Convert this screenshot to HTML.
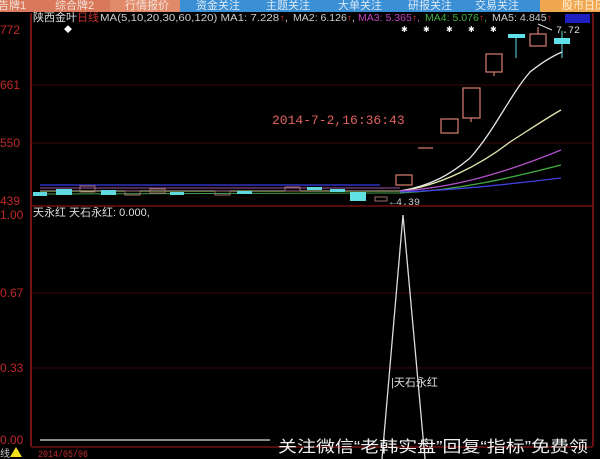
<!DOCTYPE html>
<html><head><meta charset="utf-8"><style>
html,body{margin:0;padding:0;background:#000;width:600px;height:459px;overflow:hidden}
svg{display:block}
text{font-family:"Liberation Sans","Noto Sans CJK SC",sans-serif}
.m{font-family:"Liberation Mono","Noto Sans CJK SC",monospace}
</style></head><body>
<svg width="600" height="459" viewBox="0 0 600 459" xmlns="http://www.w3.org/2000/svg">
<rect width="600" height="459" fill="#000"/>
<!-- top tabs -->
<rect x="0" y="0" width="180" height="12" fill="#d9785a"/>
<rect x="110" y="0" width="70" height="12" fill="#e08a6a"/>
<rect x="180" y="0" width="360" height="12" fill="#3b8fd4"/>
<rect x="540" y="0" width="60" height="12" fill="#f0a850"/>
<g font-size="11" fill="#f4e0d8">
<text x="-2" y="9">告牌1</text><text x="55" y="9">综合牌2</text><text x="125" y="9">行情报价</text>
<g fill="#dbe9f6"><text x="196" y="9">资金关注</text><text x="266" y="9">主题关注</text><text x="338" y="9">大单关注</text><text x="408" y="9">研报关注</text><text x="475" y="9">交易关注</text></g><text x="562" y="9" fill="#fff0d8">股市日历</text>
</g>
<!-- axes -->
<line x1="31" y1="13" x2="31" y2="446" stroke="#a01818" stroke-width="1.5"/>
<line x1="593" y1="13" x2="593" y2="446" stroke="#901818" stroke-width="1.5"/>
<g stroke="#3a0a0a" stroke-width="1">
<line x1="31" y1="85" x2="593" y2="85"/><line x1="31" y1="143" x2="593" y2="143"/>
<line x1="31" y1="293" x2="593" y2="293"/><line x1="31" y1="368" x2="593" y2="368"/>
</g>
<line x1="31" y1="206" x2="593" y2="206" stroke="#701010" stroke-width="1.5"/>
<line x1="31" y1="447" x2="593" y2="447" stroke="#701010" stroke-width="1.5"/>
<g font-size="12" fill="#c02828" class="m">
<text x="0" y="34">772</text><text x="0" y="89">661</text><text x="0" y="147">550</text><text x="0" y="205">439</text>
<text x="0" y="219">1.00</text><text x="0" y="297">0.67</text><text x="0" y="372">0.33</text><text x="0" y="444">0.00</text>
</g>
<!-- header row -->
<text x="33" y="21" font-size="11" fill="#ddd">陕西金叶<tspan fill="#c03030">日线</tspan></text>
<g font-size="10" class="m" fill="#ccc">
<text x="100" y="21" textLength="188" lengthAdjust="spacingAndGlyphs">MA(5,10,20,30,60,120) MA1: 7.228<tspan fill="#d03030">↑</tspan>,</text>
<text x="293" y="21" textLength="62" lengthAdjust="spacingAndGlyphs">MA2: 6.126<tspan fill="#d03030">↑</tspan>,</text>
<text x="358" y="21" textLength="62" lengthAdjust="spacingAndGlyphs" fill="#c040c0">MA3: 5.365<tspan fill="#d03030">↑</tspan>,</text>
<text x="425" y="21" textLength="62" lengthAdjust="spacingAndGlyphs" fill="#40b040">MA4: 5.076<tspan fill="#d03030">↑</tspan>,</text>
<text x="492" y="21" textLength="60" lengthAdjust="spacingAndGlyphs">MA5: 4.845<tspan fill="#d03030">↑</tspan></text>
</g>
<rect x="565" y="14" width="25" height="9" fill="#2020c0"/>
<g fill="#fff" font-size="8"><text x="64" y="32">◆</text><text x="401" y="32">✱</text><text x="423" y="32">✱</text><text x="446" y="32">✱</text><text x="468" y="32">✱</text><text x="490" y="32">✱</text></g>
<text x="556" y="33" font-size="10" fill="#ddd" class="m">7.72</text>
<path d="M538 24 L552 30" stroke="#ddd"/>
<!-- flat region -->
<g>
<line x1="40" y1="185" x2="380" y2="185" stroke="#3030c0" stroke-width="1.5"/>
<line x1="40" y1="191" x2="400" y2="191" stroke="#c8c890" stroke-width="1"/>
<line x1="40" y1="194" x2="400" y2="193" stroke="#40a040" stroke-width="1"/>
<line x1="40" y1="188" x2="400" y2="188" stroke="#a050a0" stroke-width="1"/>
<rect x="33" y="192" width="14" height="4" fill="#60d8e0"/>
<rect x="56" y="189" width="16" height="6" fill="#60d8e0"/>
<rect x="80" y="186" width="15" height="6" fill="none" stroke="#a07070"/>
<rect x="101" y="190" width="15" height="5" fill="#60d8e0"/>
<rect x="125" y="191" width="15" height="4" fill="none" stroke="#a07070"/>
<rect x="150" y="189" width="15" height="4" fill="none" stroke="#a07070"/>
<rect x="170" y="192" width="14" height="3" fill="#60d8e0"/>
<rect x="215" y="191" width="15" height="4" fill="none" stroke="#a07070"/>
<rect x="237" y="191" width="15" height="3" fill="#60d8e0"/>
<rect x="285" y="187" width="15" height="4" fill="none" stroke="#a07070"/>
<rect x="307" y="187" width="15" height="3" fill="#60d8e0"/>
<rect x="330" y="189" width="15" height="3" fill="#60d8e0"/>
<rect x="350" y="192" width="16" height="9" fill="#60e0e0"/>
<rect x="375" y="197" width="12" height="4" fill="none" stroke="#a07070"/>
<text x="390" y="205" font-size="10" fill="#ccc" class="m">←4.39</text>
</g>
<!-- candles -->
<g fill="none" stroke="#c87868" stroke-width="1.3">
<rect x="396" y="175" width="16" height="10"/>
<line x1="418" y1="148" x2="433" y2="148"/>
<rect x="441" y="119" width="17" height="14"/>
<rect x="463" y="88" width="17" height="30"/><line x1="471" y1="118" x2="471" y2="122"/>
<rect x="486" y="54" width="16" height="18"/><line x1="494" y1="72" x2="494" y2="76"/>
<rect x="530" y="34" width="16" height="12"/><line x1="538" y1="27" x2="538" y2="34"/>
</g>
<rect x="508" y="34" width="17" height="4" fill="#60e0e8"/><line x1="516" y1="38" x2="516" y2="58" stroke="#60e0e8"/>
<rect x="554" y="38" width="16" height="6" fill="#60e0e8"/><line x1="562" y1="31" x2="562" y2="58" stroke="#60e0e8"/>
<!-- MA lines -->
<g fill="none" stroke-width="1.3">
<path d="M400 191 C430 186 450 175 470 158 C495 130 510 95 530 72 C545 60 555 55 562 52" stroke="#e8e8e8"/>
<path d="M400 191 C440 186 480 165 510 142 C535 126 550 116 561 110" stroke="#e8e8b0"/>
<path d="M400 191 C450 188 500 175 561 150" stroke="#b050c8"/>
<path d="M400 193 C460 190 510 178 561 165" stroke="#40b040"/>
<path d="M400 192 C460 190 510 184 561 178" stroke="#4040e0"/>
</g>
<text x="272" y="124" font-size="13" fill="#e06060" class="m">2014-7-2,16:36:43</text>
<!-- lower panel -->
<text x="33" y="216" font-size="11" fill="#ddd">天永红 天石永红: 0.000,</text>
<path d="M382 459 L403 215 L425 459" stroke="#ddd" fill="none" stroke-width="1.3"/>
<text x="391" y="386" font-size="11" fill="#ddd">|天石永红</text>
<line x1="40" y1="440" x2="270" y2="440" stroke="#bbb" stroke-width="1.5"/>
<text x="0" y="457" font-size="10" fill="#ccc">线</text>
<polygon points="10,457 16,447 22,457" fill="#f0e020"/>
<text x="38" y="457" font-size="10" fill="#c02828" class="m" textLength="50" lengthAdjust="spacingAndGlyphs">2014/05/06</text>
<text x="278" y="452" font-size="16" fill="#f0f0f0" textLength="310" lengthAdjust="spacingAndGlyphs">关注微信“老韩实盘”回复“指标”免费领</text>
</svg>
</body></html>
